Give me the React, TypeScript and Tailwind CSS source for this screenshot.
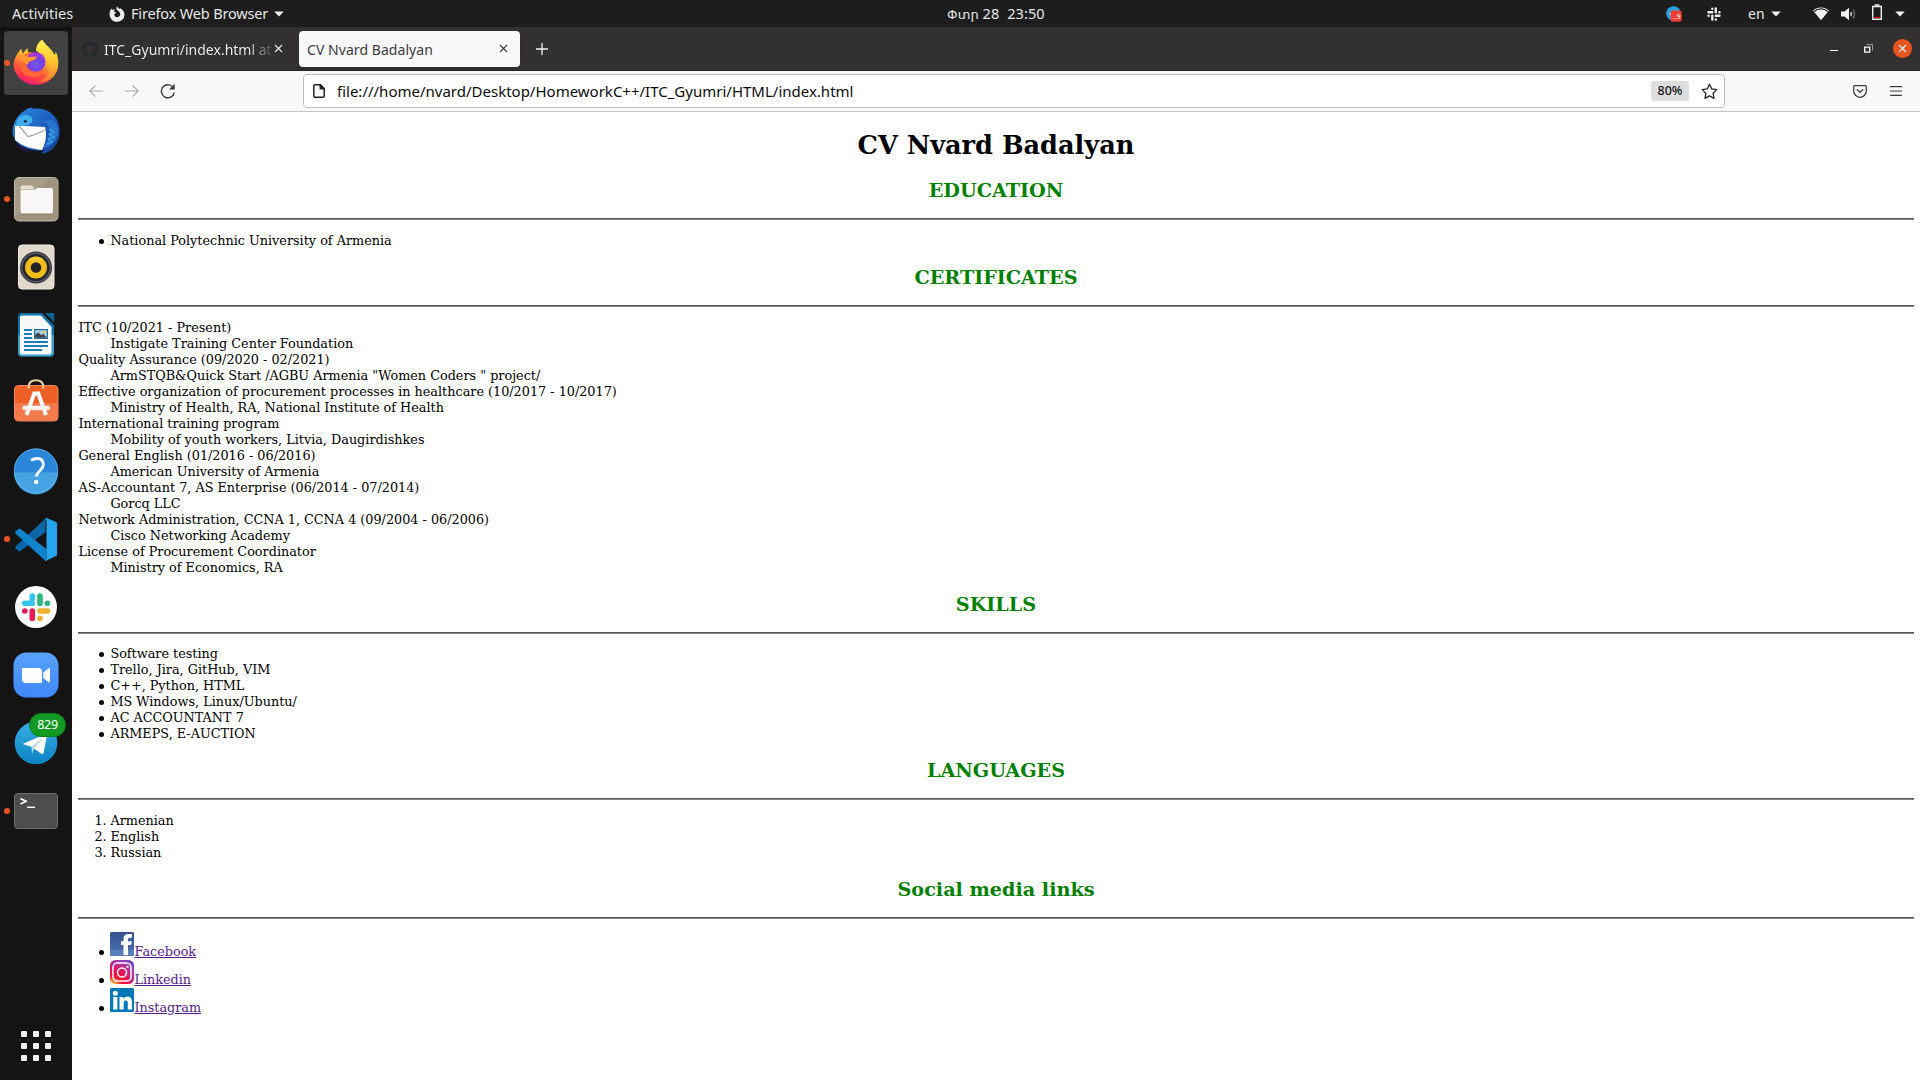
import type { ReactNode } from "react";

const UI = "font-['Noto_Sans','Open_Sans',sans-serif]";

function Caret() {
  return (
    <svg width="10" height="6" viewBox="0 0 10 6" className="shrink-0">
      <path d="M0.3 0.5h9.4L5 5.6z" fill="#f2f2f2" />
    </svg>
  );
}

function TopBar() {
  return (
    <header className={`flex h-[27px] shrink-0 items-center bg-[#1d1d1d] text-[14.500px] leading-[27px] text-[#e6e6e6] ${UI}`}>
      <div className="flex w-[109px] pl-3">
        <span className="tracking-[0.1px]">Activities</span>
      </div>
      <div className="flex w-[838px] items-center">
        <svg width="16" height="16" viewBox="0 0 16 16" className="mr-[6px]">
          <path d="M8 0.3c.5 1.2 1.700 1.900 2.300 3 .4-.3.5-.8.5-1.200 2.800 1.600 4.700 3.700 4.700 6.600A7.400 7.200 0 0 1 .6 8.500C.5 6 1.300 4.200 2.500 2.500c.1.700.4 1.100.8 1.400.8-.4 1.900-.4 2.700-.1-.8.5-1 1.300-1 1.900l2.200.5c-.3 1.200-1.600 1.300-2 2 .1 1.900 1.500 3 3.100 3 1.800 0 3-1.400 3-3.100 0-2.100-2.100-2.800-3.200-4C7.300 3 7.300 1.500 8 .3z" fill="#efefef" />
        </svg>
        <span className="mr-[6px] tracking-[-0.160px]">Firefox Web Browser</span>
        <Caret />
      </div>
      <div className="w-[719px] whitespace-pre tracking-[0.1px]">
        <span className="font-['DejaVu_Sans'] text-[13px]">Փտր</span> 28  23:50
      </div>
      <div className="flex items-center">
        <svg width="16" height="16" viewBox="0 0 16 16">
          <circle cx="7.500" cy="7.500" r="7.300" fill="#2b9fd9" />
          <path d="M2.500 8l3-1.500v2z" fill="#fff" />
          <rect x="4.500" y="4.500" width="11.200" height="11.200" rx="2.500" fill="#f23c34" />
          <text x="10.800" y="13.300" fontSize="6.500" fill="#fff" textAnchor="middle" fontFamily="Noto Sans">..9</text>
        </svg>
        <svg width="14" height="14" viewBox="0 0 14 14" className="ml-[25px]" stroke="#ededed" strokeWidth="2.400" strokeLinecap="round">
          <path d="M5.300 1.600v.1M1.500 5.200h3.800M5.300 8.800v3.700M1.500 8.800h.1M8.800 12.400v.1M8.800 8.800h3.700M8.800 1.500v3.700M12.400 5.200h.1" />
        </svg>
        <span className="ml-[27px] w-[23px] text-[14px]">en</span>
        <Caret />
        <svg width="16" height="14" viewBox="0 0 16 14" className="ml-[32px]">
          <path d="M0 3.600C4.500-.5 11.500-.5 16 3.600L8 13.200z" fill="#f2f2f2" />
          <path d="M1.200 4.400C5 1.100 11 1.100 14.800 4.400" fill="none" stroke="#1d1d1d" strokeWidth="1.300" />
        </svg>
        <svg width="16" height="14" viewBox="0 0 16 14" className="ml-[12px]">
          <path d="M0 4.500h3.500L8 .7v12.600L3.500 9.500H0z" fill="#f2f2f2" />
          <path d="M9.700 5q1.400 2 0 4" fill="none" stroke="#ddd" strokeWidth="1.400" />
          <path d="M12 2.500q3 4.500 0 9" fill="none" stroke="#777" strokeWidth="1.300" />
        </svg>
        <svg width="12" height="17" viewBox="0 0 12 17" className="mb-[2px] ml-[14px]">
          <path d="M1.700 2.500h8.600v12.800H1.700z" fill="none" stroke="#eee" strokeWidth="1.400" />
          <path d="M3.500 1h5" stroke="#eee" strokeWidth="1.500" />
          <path d="M3 13.500h6" stroke="#d90f0f" strokeWidth="1.200" />
        </svg>
        <span className="ml-[12px] flex"><Caret /></span>
      </div>
    </header>
  );
}

const G = (p: { children: ReactNode }) => (
  <svg width="48" height="48" viewBox="0 0 48 48" className="block">{p.children}</svg>
);

function Firefox() {
  return (
    <G>
      <defs>
        <linearGradient id="ff1" x1=".75" y1=".1" x2=".3" y2="1">
          <stop offset="0" stopColor="#fff44f" /><stop offset=".3" stopColor="#ffb02a" /><stop offset=".6" stopColor="#ff5a36" /><stop offset=".85" stopColor="#ff2d55" /><stop offset="1" stopColor="#e0128c" />
        </linearGradient>
        <radialGradient id="ff2" cx=".5" cy=".6" r=".6">
          <stop offset="0" stopColor="#6f5be8" /><stop offset=".6" stopColor="#7b3fe0" /><stop offset="1" stopColor="#b833e1" />
        </radialGradient>
        <linearGradient id="ff3" x1="0" y1="0" x2="0" y2="1">
          <stop offset="0" stopColor="#fff44f" /><stop offset=".5" stopColor="#ffc530" /><stop offset="1" stopColor="#ff7a33" />
        </linearGradient>
      </defs>
      <path d="M9.500 9.500c.2 2.600.8 3.800 1.700 5 1.400-3 3.600-4.700 4.600-5.300-.2 2.300 0 3.500.6 4.400 3.500-.4 6.600.4 9 2.400L41 18c3 3.500 5 8 5 10A22.500 21.500 0 0 1 1.500 27c0-6.500 3.500-13 8-17.500z" fill="url(#ff1)" />
      <path d="M30.300.8c2 4.200 10 9.500 12.200 15.200 1-1 1.300-2.500 1-4 2.300 4.500 3.600 10 2.500 15.500C44 38 35 44 26 43c7-2 12-8 11.500-15C37 19 30 16.500 24 11.500c0-5 3.500-9.500 6.300-10.700z" fill="url(#ff3)" />
      <path d="M13 15.500c5-3 9-1.500 11 1.500l-1.500 1.500-5.500 2c-2 2-3 3-3 5 0 6 5 9.500 10 8.500 3-.5 4-2 6-2-2 5-7.500 7-12.500 5.500C9 35.500 6.500 25 13 15.500z" fill="#ff6a35" />
      <circle cx="23.800" cy="23" r="9.800" fill="url(#ff2)" />
      <path d="M7.500 16c4 .5 7 1.500 9.500 2l8-.5c-1 3-4.500 4-6 4.500-2 .7-3.500 2-4 4-3-2-5.500-5.500-7.500-10z" fill="#ff9a2a" />
    </G>
  );
}

function Thunderbird() {
  return (
    <G>
      <defs>
        <linearGradient id="tb" x1="0" y1="0" x2="1" y2="1"><stop offset="0" stopColor="#2a8fe0" /><stop offset=".5" stopColor="#1c5fc0" /><stop offset="1" stopColor="#163c8c" /></linearGradient>
      </defs>
      <path d="M12 4C16 1 19 .3 21 .5l-1 1.500C33 0 42 6 46 15c2 6 2.500 13 0 19-3 7-9 12-17 13l3-4C18 46 2 38 .5 26 0 18 5 8 12 4z" fill="url(#tb)" />
      <path d="M3 33c4 7 10 10 18 12-8 1-15-4-18-12z" fill="#251a5e" />
      <path d="M31 14c8 3 9 16 0 28 8-3 13-8 15-15 1-6-1-12-6-14z" fill="#2873cc" />
      <path d="M3 18.500L33 20c2 8 1 15-3 23-11-1-20-4-27-10z" fill="#fff" />
      <path d="M7 19c4 4 6 7 9 10.500 5-1 12-4 17-6.500" fill="none" stroke="#9aa3ad" strokeWidth="1.200" />
      <path d="M5 13c3-5 9-6 13-4 5 3 2 9-5 9.500-4 .5-7-.5-9 1z" fill="#43b0ee" />
      <path d="M37 22l5 3-5 2 5 3-6 2 4 3-6 2" fill="none" stroke="#3ba4ea" strokeWidth="1.300" />
      <circle cx="13.300" cy="14.300" r="1.500" fill="#182850" />
    </G>
  );
}

function Files() {
  return (
    <G>
      <rect x="2.500" y="2.500" width="43.500" height="43.500" rx="4.500" fill="#9d937f" stroke="#c0b7a4" />
      <path d="M3 42V7q0-4 4-4h30z" fill="#a9a08d" opacity=".7" />
      <path d="M8.500 14V12.500q0-2 2-2h9q1.500 0 2 1.500l.7 2.500h-13z" fill="#e4dfd3" />
      <path d="M8.500 16q0-1 2-1h12l2.500-2h14q2 0 2 2v21.500q0 2-2 2H10.500q-2 0-2-2z" fill="#f8f7f5" />
      <path d="M10 39.300h30" stroke="#766d5d" strokeWidth=".8" opacity=".6" />
    </G>
  );
}

function Rhythmbox() {
  return (
    <G>
      <rect x="6.500" y="2" width="35.500" height="44" rx="3.500" fill="#e0d9cc" stroke="#f1ece2" />
      <circle cx="24" cy="24.500" r="16" fill="#38383b" />
      <circle cx="24" cy="24.500" r="14.800" fill="#575c69" />
      <circle cx="24" cy="24.500" r="13.500" fill="#22242b" />
      <circle cx="24" cy="24.500" r="11" fill="#efbd16" />
      <path d="M17 16a11 11 0 0 1 14 0L24 24.500z" fill="#ffd34a" opacity=".5" />
      <circle cx="24" cy="24.500" r="5.300" fill="#252525" />
    </G>
  );
}

function Writer() {
  return (
    <G>
      <path d="M10 2h20L42 14.500V41.500q0 4-4 4H10q-4 0-4-4V6q0-4 4-4z" fill="#0e73a8" />
      <path d="M6 24h36v17.500q0 4-4 4H10q-4 0-4-4z" fill="#3e9ecb" />
      <path d="M10 4.500h19L39.500 16v25.500q0 2-2 2H10q-2 0-2-2v-35q0-2 2-2z" fill="#f8f9fa" />
      <path d="M33 2h8.500q.8 0 .8 1v8.500z" fill="#0e6390" />
      <path d="M12 19h8M12 23h8M12 27h8M12 31h24M12 35h24M12 39h18" stroke="#1d7cb0" strokeWidth="2" />
      <rect x="22" y="18" width="14" height="10" fill="#1d6f9d" />
      <rect x="23.200" y="19.200" width="11.600" height="7.600" fill="#aecfe0" />
      <path d="M23.200 26.800v-3l3-2.500 3 3 2-1.500 3.600 4z" fill="#3d4650" />
      <circle cx="32.300" cy="21" r="1.300" fill="#f7cf3d" />
    </G>
  );
}

function Software() {
  return (
    <G>
      <rect x="2.500" y="6.500" width="43.500" height="35.500" rx="4" fill="#ee5f26" stroke="#f58b62" />
      <path d="M3 24h42.500V38.500q0 3-3.500 3H6q-3 0-3-3z" fill="#f37a4b" />
      <path d="M16.700 9.500V6.800Q17.400 1.200 24 1.200t7.300 5.600v2.700" fill="none" stroke="#ecd5a6" strokeWidth="2" />
      <path d="M14.500 36L22.300 14.500h4L34 36" fill="none" stroke="#fff" strokeWidth="4" />
      <path d="M12.500 29h23.300" stroke="#fbe9e0" strokeWidth="4.500" strokeLinecap="round" />
      <path d="M12 28.300h24.300" stroke="#fff" strokeWidth="2" strokeLinecap="round" />
    </G>
  );
}

function Help() {
  return (
    <G>
      <circle cx="24" cy="23.500" r="22" fill="#2a86d8" />
      <path d="M2 25.500a22 22 0 0 0 44 0z" fill="#46a3e3" />
      <circle cx="24" cy="23.500" r="21.700" fill="none" stroke="#6cb7ee" strokeWidth=".7" />
      <path d="M19 13.200Q22 11.500 25 11.500q6.300 0 6.300 6c0 6-6.800 6.500-6.800 12" fill="none" stroke="#fff" strokeWidth="2.800" />
      <circle cx="24.200" cy="35" r="2.200" fill="#fff" />
    </G>
  );
}

function VSCode() {
  return (
    <G>
      <path d="M3.500 31.500L33.500 3.500V17L8.500 36q-1 .8-2 0l-3-2.500q-1-1 0-2z" fill="#0b66a8" />
      <path d="M3.500 16.500l3-2.500q1-.8 2 0l26 20v12q-1.300-.2-2-1L3.500 18.500q-1-1 0-2z" fill="#1183cc" />
      <path d="M34.500 3L44 7q1 .5 1 1.500v31q0 1-1 1.500L34.500 45.500q-1.200.5-2-.5 2 .8 2-2V6q0-2.500-2-1.500.800-2 2-1.500z" fill="#25a5ee" />
    </G>
  );
}

function Slack() {
  return (
    <G>
      <circle cx="24" cy="24" r="21" fill="#fff" />
      <g strokeWidth="5.600" strokeLinecap="round" fill="none">
        <path d="M20.300 13v.1M20.300 13v2.800M12.800 20.300h7.500" stroke="#36c5f0" />
        <path d="M28 13v7.500M35.300 20.300h.1" stroke="#2eb67d" />
        <path d="M28 28h7.500M28 35.300v.1" stroke="#ecb22e" />
        <path d="M20.300 28v7.500M12.800 28h.1" stroke="#e01e5a" />
      </g>
    </G>
  );
}

function Zoom() {
  return (
    <G>
      <defs><linearGradient id="zm" x1="0" y1="0" x2="0" y2="1"><stop offset="0" stopColor="#57a2ff" /><stop offset="1" stopColor="#4087fc" /></linearGradient></defs>
      <rect x="1.500" y="1.500" width="45" height="45" rx="13" fill="url(#zm)" />
      <path d="M10 17h16q4 0 4 4v11H14q-4 0-4-4z" fill="#fff" />
      <path d="M31.300 21.500l5.200-4q1.500-1 1.500.5v12.500q0 1.500-1.500.5l-5.200-4z" fill="#fff" />
    </G>
  );
}

function Telegram() {
  return (
    <div className="relative">
      <G>
        <defs><linearGradient id="tg" x1="0" y1="0" x2="0" y2="1"><stop offset="0" stopColor="#37aee2" /><stop offset="1" stopColor="#0d82c4" /></linearGradient></defs>
        <circle cx="24" cy="24" r="21.300" fill="url(#tg)" />
        <path d="M10.500 25L33.500 15q2-.7 1.500 1.500L31.500 34q-.5 1.800-2.200.8l-9.800-7z" fill="#fff" />
        <path d="M19.500 27.800L31 19 22 29.500l-2 5.500z" fill="#b9d9ea" />
      </G>
      <span className={`absolute left-[17px] top-[-6px] flex h-[24px] w-[37px] items-center justify-center rounded-full border border-[#0d7d1c] bg-[#139a24] pt-px text-[12.500px] tracking-[-0.3px] text-white ${UI}`}>829</span>
    </div>
  );
}

function Terminal() {
  return (
    <G>
      <rect x="2.500" y="6.500" width="43" height="35" rx="3.500" fill="#4d4d4d" stroke="#6d6d6d" />
      <path d="M8.500 11.500l5.500 2.700-5.500 2.700" fill="none" stroke="#fff" strokeWidth="1.700" />
      <path d="M15 20.300h8" stroke="#fff" strokeWidth="1.500" />
    </G>
  );
}

const apps: { icon: () => ReactNode; running?: boolean; active?: boolean }[] = [
  { icon: Firefox, running: true, active: true },
  { icon: Thunderbird },
  { icon: Files, running: true },
  { icon: Rhythmbox },
  { icon: Writer },
  { icon: Software },
  { icon: Help },
  { icon: VSCode, running: true },
  { icon: Slack },
  { icon: Zoom },
  { icon: Telegram },
  { icon: Terminal, running: true },
];

function Dock() {
  return (
    <nav className="flex w-[72px] shrink-0 flex-col justify-between bg-[#141414] pt-1">
      <div className="flex flex-col gap-1">
        {apps.map(({ icon: Icon, running, active }, i) => (
          <div key={i} className={`ml-1 flex h-16 w-16 items-center rounded-[4px] ${active ? "bg-[#414141]" : ""}`}>
            <span className={`h-[6px] w-[6px] rounded-full ${running ? "bg-[#e95420]" : ""}`} />
            <span className="ml-[2px]"><Icon /></span>
          </div>
        ))}
      </div>
      <div className="mb-[19px] ml-[21px] grid w-[30px] grid-cols-3 gap-[6px]">
        {Array.from({ length: 9 }, (_, i) => (
          <span key={i} className="h-[6px] w-[6px] rounded-[1px] bg-[#efefef]" />
        ))}
      </div>
    </nav>
  );
}

function Cross({ color }: { color: string }) {
  return (
    <svg width="9" height="9" viewBox="0 0 9 9" className="shrink-0">
      <path d="M1 1l7 7M8 1L1 8" stroke={color} strokeWidth="1.100" />
    </svg>
  );
}

function TabStrip() {
  return (
    <div className={`flex h-[44px] shrink-0 items-center border-b border-[#232122] bg-[#333031] text-[14px] ${UI}`}>
      <div className="flex w-[227px] items-center pl-[10px]">
        <svg width="16" height="16" viewBox="0 0 16 16">
          <path fill="#24292f" d="M8 0C3.580 0 0 3.580 0 8c0 3.540 2.290 6.530 5.470 7.590.4.070.55-.17.55-.38v-1.490c-2.010.37-2.530-.49-2.690-.94-.09-.23-.48-.94-.82-1.130-.28-.15-.68-.52-.01-.53.63-.01 1.080.58 1.230.82.72 1.210 1.870.87 2.330.66.070-.52.28-.87.51-1.070-1.780-.2-3.640-.89-3.640-3.950 0-.87.31-1.590.82-2.150-.08-.2-.36-1.020.08-2.120 0 0 .67-.21 2.200.82a7.400 7.400 0 0 1 4 0c1.530-1.040 2.200-.82 2.200-.82.44 1.100.16 1.920.08 2.120.51.56.82 1.270.82 2.150 0 3.070-1.870 3.750-3.650 3.950.29.25.54.73.54 1.480v2.200c0 .21.15.46.55.38A8 8 0 0 0 16 8c0-4.420-3.580-8-8-8z" />
        </svg>
        <div className="ml-[6px] mr-px w-[169px] overflow-hidden whitespace-nowrap bg-linear-to-r from-[#f2f2f2] from-85% to-[#444142] bg-clip-text pt-[2px] text-transparent">ITC_Gyumri/index.html at</div>
        <Cross color="#eeeeee" />
      </div>
      <div className="flex h-[36px] w-[221px] items-center justify-between rounded-[4px] bg-[#f8f8f8] pl-2 pr-[12px] text-[#3c3b3e] shadow">
        <span className="pt-[2px] tracking-[0.06px]">CV Nvard Badalyan</span>
        <Cross color="#3c3b3e" />
      </div>
      <svg width="12" height="12" viewBox="0 0 12 12" className="ml-[16px]">
        <path d="M6 0v12M0 6h12" stroke="#f2f2f2" strokeWidth="1.300" />
      </svg>
      <div className="ml-auto mr-[8px] flex items-center">
        <span className="mt-1 h-[1px] w-[8px] bg-white" />
        <svg width="9" height="9" viewBox="0 0 9 9" className="ml-[26px]">
          <path d="M.7 3.200h5v5h-5z" fill="none" stroke="#fff" strokeWidth="1.300" />
          <path d="M2.500.5h6v6" fill="none" stroke="#999" strokeWidth="1" />
        </svg>
        <span className="ml-[20px] flex h-[19px] w-[19px] items-center justify-center rounded-full bg-[#e95420]">
          <Cross color="#ffffff" />
        </span>
      </div>
    </div>
  );
}

function Toolbar() {
  return (
    <div className={`flex h-[41px] shrink-0 items-center border-b border-[#c4c4c4] bg-[#f8f8f8] ${UI}`}>
      <div className="flex w-[231px] items-center pl-[17px]">
        <svg width="14" height="14" viewBox="0 0 14 14" fill="none" stroke="#aaa" strokeWidth="1.200"><path d="M14 7H.8M6.500 1.300L.8 7l5.700 5.700" /></svg>
        <svg width="14" height="14" viewBox="0 0 14 14" fill="none" stroke="#aaa" strokeWidth="1.200" className="ml-[22px]"><path d="M0 7h13.200M7.500 1.300L13.200 7l-5.700 5.700" /></svg>
        <svg width="16" height="16" viewBox="0 0 16 16" className="ml-[21px]">
          <path d="M13.800 5.600A6.500 6.500 0 1 0 14.300 9.300" fill="none" stroke="#38373b" strokeWidth="1.400" />
          <path d="M14.700.8v5.700H9z" fill="#38373b" />
        </svg>
      </div>
      <div className="flex h-[34px] w-[1422px] items-center rounded-[4px] border border-[#bdbdbd] bg-white">
        <svg width="12" height="14" viewBox="0 0 12 14" className="ml-[9px]">
          <path d="M2 .8h5.500l3.700 3.700V12q0 1.200-1.200 1.200H2Q.8 13.200.8 12V2Q.8.8 2 .8z" fill="none" stroke="#222" strokeWidth="1.500" />
          <path d="M7 .8v4.200h4.500z" fill="#222" stroke="#222" />
        </svg>
        <span className="ml-[12px] text-[15px] leading-[20px] text-[#0c0c0d]">file:///home/nvard/Desktop/HomeworkC++/ITC_Gyumri/HTML/index.html</span>
        <span className="ml-auto flex h-[20px] w-[38px] items-center justify-center rounded-[3px] bg-[#dedede] text-[12.500px] font-medium text-[#15141a]">80%</span>
        <svg width="17" height="17" viewBox="0 0 17 17" className="ml-[12px] mr-[6px]">
          <path d="M8.500 1.200l2.200 4.700 5.100.7-3.700 3.600.9 5.200-4.500-2.500L4 15.400l.9-5.200L1.200 6.600l5.100-.7z" fill="none" stroke="#28272c" strokeWidth="1.300" strokeLinejoin="round" />
        </svg>
      </div>
      <svg width="14" height="13" viewBox="0 0 14 13" className="ml-[128px]" fill="none" stroke="#3e3d40" strokeWidth="1.300">
        <path d="M1.700.7h10.600q1 0 1 1V6q0 2.500-2 4.500T7 12.300 2.700 10.500.7 6V1.700q0-1 1-1zM3.800 4.300L7 7.400l3.200-3.100" />
      </svg>
      <svg width="12" height="10" viewBox="0 0 12 10" className="ml-[23px]" stroke="#3e3d40" strokeWidth="1.200">
        <path d="M0 .7h12M0 5h12M0 9.300h12" />
      </svg>
    </div>
  );
}

function Heading({ children, size = "h-[56px] pt-px", gap = "mb-[13px]" }: { children: string; size?: string; gap?: string }) {
  return (
    <>
      <h2 className={`flex items-center justify-center text-[19.200px] font-bold text-[#008000] ${size}`}>{children}</h2>
      <div className={`h-[2px] border-t border-[#555555] bg-[#888888] ${gap}`} />
    </>
  );
}

const certificates: [string, string][] = [
  ["ITC (10/2021 - Present)", "Instigate Training Center Foundation"],
  ["Quality Assurance (09/2020 - 02/2021)", "ArmSTQB&Quick Start /AGBU Armenia \"Women Coders \" project/"],
  ["Effective organization of procurement processes in healthcare (10/2017 - 10/2017)", "Ministry of Health, RA, National Institute of Health"],
  ["International training program", "Mobility of youth workers, Litvia, Daugirdishkes"],
  ["General English (01/2016 - 06/2016)", "American University of Armenia"],
  ["AS-Accountant 7, AS Enterprise (06/2014 - 07/2014)", "Gorcq LLC"],
  ["Network Administration, CCNA 1, CCNA 4 (09/2004 - 06/2006)", "Cisco Networking Academy"],
  ["License of Procurement Coordinator", "Ministry of Economics, RA"],
];

const skills = ["Software testing", "Trello, Jira, GitHub, VIM", "C++, Python, HTML", "MS Windows, Linux/Ubuntu/", "AC ACCOUNTANT 7", "ARMEPS, E-AUCTION"];

function BulletList({ items }: { items: string[] }) {
  return (
    <ul className="pl-[21px]">
      {items.map((t) => (
        <li key={t} className="flex items-center">
          <span className="mr-[6.400px] mt-px h-[5px] w-[5px] rounded-full bg-black" />
          {t}
        </li>
      ))}
    </ul>
  );
}

function FacebookLogo() {
  return (
    <svg width="24" height="24" viewBox="0 0 24 24">
      <defs><linearGradient id="fb" x1="0" y1="0" x2="0" y2="1"><stop offset="0" stopColor="#34508f" /><stop offset="1" stopColor="#4d74b8" /></linearGradient></defs>
      <rect width="24" height="24" rx="1.500" fill="url(#fb)" />
      <path d="M0 18h24v4.500q0 1.500-1.500 1.500h-21Q0 24 0 22.500z" fill="#6384c0" opacity=".7" />
      <path d="M13.500 23V13H11V9.300h2.500V7q0-5 5-5H22v3.800h-2q-2 0-2 1.700v1.800h3.700L21.200 13H18v10z" fill="#fff" />
    </svg>
  );
}

function InstagramLogo() {
  return (
    <svg width="24" height="24" viewBox="0 0 24 24">
      <defs>
        <radialGradient id="ig" cx=".1" cy="1.050" r="1.250">
          <stop offset="0" stopColor="#ffdd55" /><stop offset=".12" stopColor="#ff9a3c" /><stop offset=".32" stopColor="#ff0a2f" /><stop offset=".55" stopColor="#e5145f" /><stop offset=".85" stopColor="#9a3fb5" /><stop offset="1" stopColor="#7a3fc0" />
        </radialGradient>
      </defs>
      <rect width="24" height="24" rx="5.500" fill="url(#ig)" />
      <rect x="3" y="3" width="18" height="18" rx="4.500" fill="none" stroke="#fff" strokeWidth="1.500" />
      <circle cx="12" cy="12.500" r="4.500" fill="none" stroke="#fff" strokeWidth="1.500" />
      <circle cx="17.500" cy="6.800" r="1.100" fill="#fff" />
    </svg>
  );
}

function LinkedInLogo() {
  return (
    <svg width="24" height="24" viewBox="0 0 24 24">
      <rect width="24" height="24" rx="1.500" fill="#0077b7" />
      <circle cx="5.300" cy="5.200" r="2.500" fill="#fff" />
      <path d="M3.200 9h4.200v12.500H3.200zM9.500 9h4v1.800Q15 8.600 17.300 8.600 22 8.600 22 14v7.500h-4.200V14.800q0-2.600-2-2.600-2.100 0-2.100 2.600v6.700H9.500z" fill="#fff" />
    </svg>
  );
}

const links = [
  { label: "Facebook", Logo: FacebookLogo },
  { label: "Linkedin", Logo: InstagramLogo },
  { label: "Instagram", Logo: LinkedInLogo },
];

function Page() {
  return (
    <main className="flex-1 bg-white px-[6px] pt-[14px] font-['DejaVu_Serif',serif] text-[12.800px] leading-4 text-black">
      <h1 className="flex h-[35px] items-center justify-center pt-[2px] text-[25.600px] font-bold leading-8">CV Nvard Badalyan</h1>
      <Heading size="h-[57px] pt-[2px]">EDUCATION</Heading>
      <BulletList items={["National Polytechnic University of Armenia"]} />
      <Heading>CERTIFICATES</Heading>
      <dl className="pl-[0.400px]">
        {certificates.map(([t, d]) => (
          <div key={t}>
            <dt>{t}</dt>
            <dd className="pl-8">{d}</dd>
          </div>
        ))}
      </dl>
      <Heading gap="mb-3">SKILLS</Heading>
      <BulletList items={skills} />
      <Heading>LANGUAGES</Heading>
      <ol className="pl-[16.400px]">
        {["Armenian", "English", "Russian"].map((t, i) => (
          <li key={t} className="flex"><span className="w-4">{i + 1}.</span>{t}</li>
        ))}
      </ol>
      <Heading gap="mb-3">Social media links</Heading>
      <ul className="flex flex-col gap-1 pl-[21px] pt-[1px]">
        {links.map(({ label, Logo }) => (
          <li key={label} className="flex h-6 items-end">
            <span className="mb-px mr-[6px] h-[5px] w-[5px] rounded-full bg-black" />
            <Logo />
            <a className="mb-[-4px] ml-[0.400px] text-[#551a8b] underline">{label}</a>
          </li>
        ))}
      </ul>
    </main>
  );
}

export default function App() {
  return (
    <div className="flex h-[1080px] w-[1920px] flex-col overflow-hidden">
      <TopBar />
      <div className="flex min-h-0 flex-1">
        <Dock />
        <div className="flex min-w-0 flex-1 flex-col">
          <TabStrip />
          <Toolbar />
          <Page />
        </div>
      </div>
    </div>
  );
}
